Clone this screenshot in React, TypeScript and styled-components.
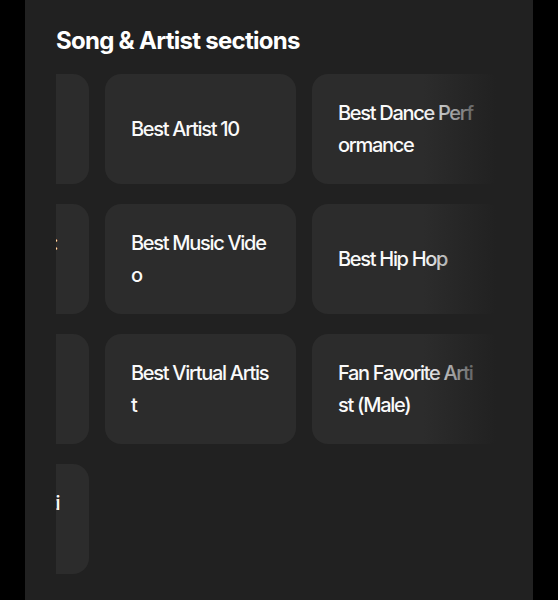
import styled, { createGlobalStyle } from "styled-components";

const GlobalStyle = createGlobalStyle`
  html, body {
    margin: 0;
    padding: 0;
    background: #000;
    height: 100%;
  }
  #root {
    height: 100%;
  }
`;

const Page = styled.div`
  height: 600px;
  padding-left: 25px;
  background: #000;
`;

const Panel = styled.section`
  width: 508px;
  height: 100%;
  box-sizing: border-box;
  padding: 26px 30px 0 31px;
  background: #212121;
  font-family: Inter, "Noto Sans", sans-serif;
`;

const Title = styled.h2`
  margin: 0 0 18px;
  font-size: 24px;
  line-height: 30px;
  font-weight: 700;
  letter-spacing: -0.03em;
  color: #fff;
`;

const Scroller = styled.div`
  position: relative;
  display: flex;
  justify-content: flex-end;
  overflow: hidden;
`;

const Grid = styled.div`
  flex: none;
  display: grid;
  grid-template-columns: repeat(3, 191px);
  grid-auto-rows: 110px;
  gap: 20px 16px;
`;

const Card = styled.div`
  display: flex;
  align-items: center;
  box-sizing: border-box;
  padding: 0 25px 0 26px;
  border-radius: 16px;
  background: #2c2c2c;
  color: #fafafa;
  font-size: 20px;
  font-weight: 500;
  line-height: 32px;
  letter-spacing: -0.065em;
  word-break: break-all;
`;

const Fade = styled.div`
  position: absolute;
  top: 0;
  right: 0;
  bottom: 0;
  width: 80px;
  pointer-events: none;
  background: linear-gradient(to right, rgba(33, 33, 33, 0), #212121 92%);
`;

const categories = [
  "Best OST",
  "Best Artist 10",
  "Best Dance Performance",
  "Best New Artist: Male",
  "Best Music Video",
  "Best Hip Hop",
  "Best Band",
  "Best Virtual Artist",
  "Fan Favorite Artist (Male)",
  "Best Female Artist",
];

export default function App() {
  return (
    <>
      <GlobalStyle />
      <Page>
        <Panel>
          <Title>Song &amp; Artist sections</Title>
          <Scroller>
            <Grid>
              {categories.map((name) => (
                <Card key={name}>{name}</Card>
              ))}
            </Grid>
            <Fade />
          </Scroller>
        </Panel>
      </Page>
    </>
  );
}
